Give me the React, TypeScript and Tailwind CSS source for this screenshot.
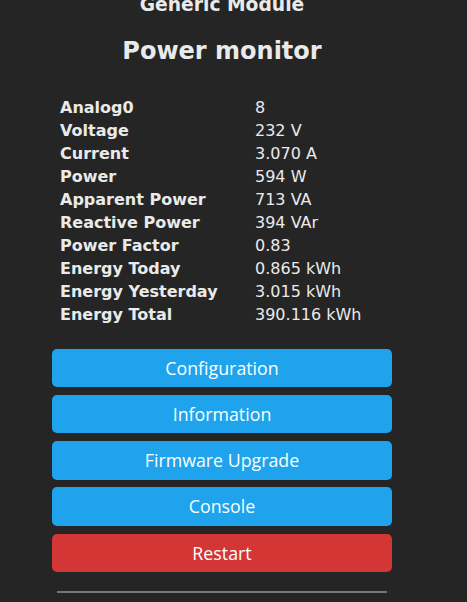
import React from "react";

const rows: [string, string][] = [
  ["Analog0", "8"],
  ["Voltage", "232 V"],
  ["Current", "3.070 A"],
  ["Power", "594 W"],
  ["Apparent Power", "713 VA"],
  ["Reactive Power", "394 VAr"],
  ["Power Factor", "0.83"],
  ["Energy Today", "0.865 kWh"],
  ["Energy Yesterday", "3.015 kWh"],
  ["Energy Total", "390.116 kWh"],
];

const buttons: { label: string; red?: boolean }[] = [
  { label: "Configuration" },
  { label: "Information" },
  { label: "Firmware Upgrade" },
  { label: "Console" },
  { label: "Restart", red: true },
];

export default function App() {
  return (
    <div className="h-[602px] overflow-hidden bg-[#252525] font-['DejaVu_Sans',Verdana,sans-serif] text-[#eaeaea]">
      <div className="pl-[52px]">
        <div className="w-[340px]">
          <h3 className="-mt-[6.5px] text-center text-[18.72px] font-bold leading-[22px]">
            Generic Module
          </h3>
          <h2 className="mt-[21px] text-center text-[24px] font-bold leading-[28px]">
            Power monitor
          </h2>
          <div className="mt-[31.3px] grid grid-cols-[195px_1fr] pl-[8px]">
            {rows.map(([k, v]) => (
              <React.Fragment key={k}>
                <div className="text-[16px] font-bold leading-[23px] whitespace-nowrap">{k}</div>
                <div className="text-[16px] leading-[23px] whitespace-nowrap">{v}</div>
              </React.Fragment>
            ))}
          </div>
          <div className="mt-[23px] flex flex-col gap-[7.8px]">
            {buttons.map((b) => (
              <button
                key={b.label}
                className={`h-[38.4px] w-full rounded-[5px] font-['Open_Sans',sans-serif] text-[17.8px] leading-[38.4px] text-[#faffff] ${
                  b.red ? "bg-[#d43535]" : "bg-[#1fa3ec]"
                }`}
              >
                {b.label}
              </button>
            ))}
          </div>
          <div className="mx-[5px] mt-[18.8px] h-[2px] bg-[#777777]" />
          <div className="mt-[8.6px] text-right text-[11.6px] leading-[13px] text-[#aaaaaa]">
            Tasmota 9.5.0 by Theo Arends
          </div>
        </div>
      </div>
    </div>
  );
}
